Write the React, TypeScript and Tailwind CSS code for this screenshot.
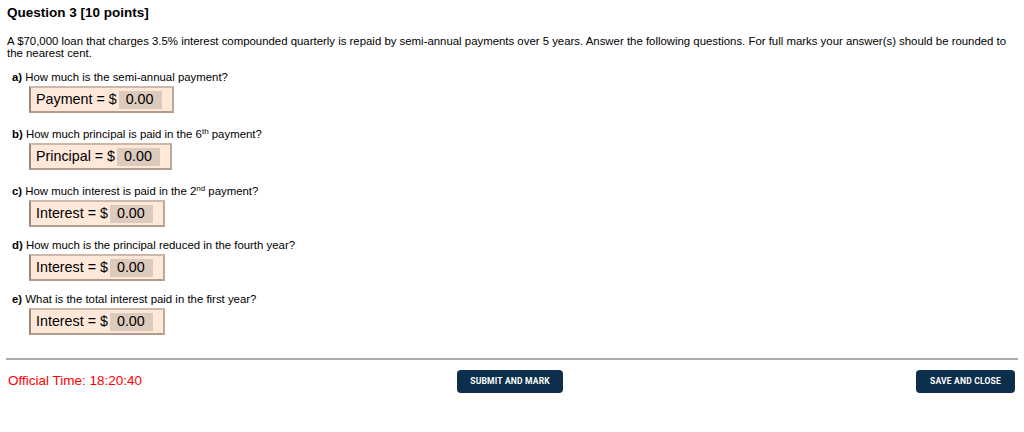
const parts = [
	{ id: "a", before: "How much is the semi-annual payment?", label: "Payment" },
	{ id: "b", before: "How much principal is paid in the 6", sup: "th", after: " payment?", label: "Principal" },
	{ id: "c", before: "How much interest is paid in the 2", sup: "nd", after: " payment?", label: "Interest" },
	{ id: "d", before: "How much is the principal reduced in the fourth year?", label: "Interest" },
	{ id: "e", before: "What is the total interest paid in the first year?", label: "Interest" },
];

function AnswerBox({ label }: { label: string }) {
	return (
		<div className="ml-[17px] mt-[2px] flex h-[27px] w-fit items-center border-2 border-t-[#cdb8aa] border-l-[#9d8778] border-r-[#c2a898] border-b-[#b49b8b] bg-[#fde8da] pl-[5px] pr-[10px] text-[14.3px] text-black">
			<span>{label} = $</span>
			<span className="ml-[2px] flex h-[18px] w-[43px] items-center bg-[#dccabd] pl-[7px]">0.00</span>
		</div>
	);
}

export default function App() {
	return (
		<div className="h-[432px] w-[1024px] bg-white text-black" style={{ fontFamily: '"Liberation Sans", Arial, sans-serif' }}>
			<div className="px-[7px] pt-[5px]">
				<h1 className="text-[13.5px] font-bold leading-[16px]">Question 3 [10 points]</h1>
				<p className="mt-[14px] text-[11.4px] leading-[12px]">
					A $70,000 loan that charges 3.5% interest compounded quarterly is repaid by semi-annual payments over 5 years. Answer the following questions. For full marks your answer(s) should be rounded to the nearest cent.
				</p>
				<div className="mt-[11px] flex flex-col gap-[11px] pl-[5px]">
					{parts.map((p) => (
						<div key={p.id}>
							<div className={p.sup ? "pt-[3px] text-[11.4px] leading-[14px]" : "text-[11.4px] leading-[14px]"}>
								<b>{p.id})</b> {p.before}
								{p.sup && <sup className="text-[8px]">{p.sup}</sup>}
								{p.after}
							</div>
							<AnswerBox label={p.label} />
						</div>
					))}
				</div>
			</div>
			<div className="mx-[6px] mt-[23px] h-[2px] bg-[#ababab]" />
			<div className="flex items-center justify-between px-[8px] pt-[10px]">
				<span className="text-[13.5px] text-[#ff0000]">Official Time: 18:20:40</span>
				<button className="ml-[315px] h-[23px] w-[106px] rounded-[4px] bg-[#0d2f4d] text-[8.5px] font-bold tracking-[0.2px] text-white" style={{ fontFamily: 'Roboto, "Liberation Sans", sans-serif' }}>
					SUBMIT AND MARK
				</button>
				<button className="ml-auto mr-[1px] h-[23px] w-[99px] rounded-[4px] bg-[#0d2f4d] text-[8.5px] font-bold tracking-[0.2px] text-white" style={{ fontFamily: 'Roboto, "Liberation Sans", sans-serif' }}>
					SAVE AND CLOSE
				</button>
			</div>
		</div>
	);
}
